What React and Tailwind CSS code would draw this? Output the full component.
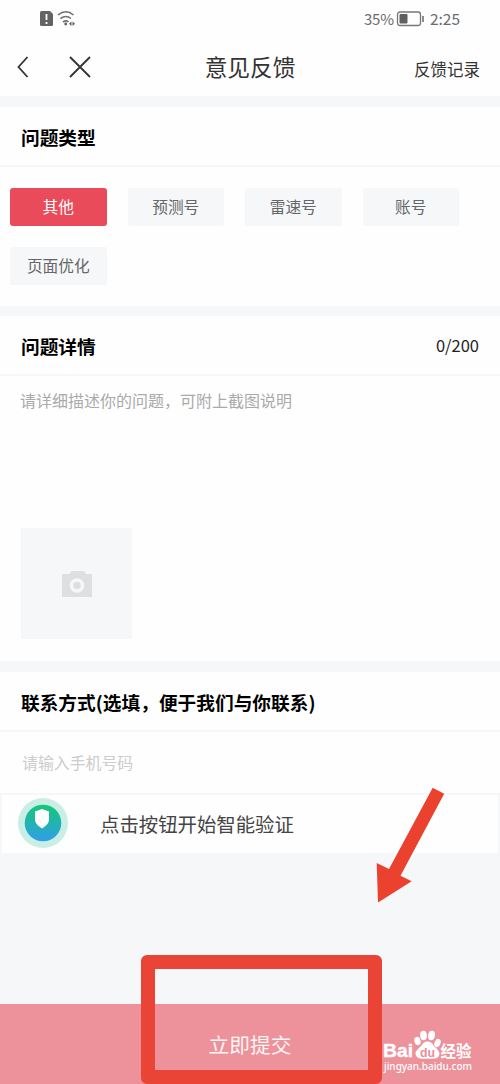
const chips = ['其他', '预测号', '雷速号', '账号', '页面优化'];

function StatusBar() {
  return (
    <div className="flex h-[38px] items-center justify-between pl-[40px] pr-[40px] text-[15.500px] text-[#6b6b6b]">
      <svg width="36" height="18" viewBox="0 0 36 18" fill="none">
        <path d="M1.500 1h8.500l3 3v10.500q0 1.500-1.500 1.500h-10Q0 16 0 14.500V2.500Q0 1 1.500 1Z" fill="#636363" />
        <path d="M6.500 4v6M6.500 12v2" stroke="#fff" strokeWidth="1.800" />
        <path d="M18 5q8-6.500 15.500 0M20.500 8.500q5.500-4 10.500 0M23 12q3-2.300 5.500 0" stroke="#707070" strokeWidth="1.600" />
        <circle cx="25.700" cy="14" r="1.400" fill="#606060" />
        <path d="m31.500 11.500-2.500 2.300 2.500 2.300ZM32.500 11.500l2.500 2.300-2.500 2.300Z" fill="#606060" />
      </svg>
      <div className="flex items-center">
        <span className="w-[32px] text-[15px] tracking-[-0.2px]">35%</span>
        <svg width="28" height="16" viewBox="0 0 28 16">
          <rect x="1.500" y="1" width="23" height="13.500" rx="2.500" fill="none" stroke="#777" strokeWidth="1.300" />
          <rect x="3.500" y="3" width="8" height="9.500" rx="1" fill="#606060" />
          <path d="M27 5v6" stroke="#666" strokeWidth="1.500" />
        </svg>
        <span className="ml-[6px]">2:25</span>
      </div>
    </div>
  );
}

function SectionTitle({ children, aside }) {
  return (
    <div className="flex h-[60px] items-center justify-between border-b-2 border-[#f6f7f7] px-[21px] pt-[2px] text-[18.700px] font-bold text-black">
      <h2>{children}</h2>
      {aside && <span className="pb-[2px] text-[16.500px] font-normal text-[#222]">{aside}</span>}
    </div>
  );
}

function Watermark() {
  return (
    <div className="absolute right-[20px] bottom-[6px] w-[98px] text-white">
      <svg width="98" height="50" viewBox="0 0 98 50" className="block">
        <g fill="#fff">
          <ellipse cx="35.500" cy="13" rx="3" ry="4.300" transform="rotate(-18 35.500 13)" />
          <ellipse cx="41.500" cy="7.500" rx="3.400" ry="4.700" transform="rotate(-5 41.500 7.500)" />
          <ellipse cx="49.500" cy="7.500" rx="3.400" ry="4.700" transform="rotate(10 49.500 7.500)" />
          <ellipse cx="55.500" cy="15" rx="3" ry="4.300" transform="rotate(20 55.500 15)" />
          <path d="M45.500 13.500q4 0 6 4l4 4q4 5 0 8-3 2-10 1-7 1-10-1-4-4 0-8l4-4q2-4 6-4Z" />
          <text x="1" y="29" fontFamily="Liberation Sans" fontWeight="bold" fontSize="19" textLength="30" lengthAdjust="spacingAndGlyphs" stroke="#fff" strokeWidth="0.400">Bai</text>
          <text x="58.500" y="28.500" fontFamily="Noto Sans CJK SC" fontWeight="bold" fontSize="15.500" textLength="31">经验</text>
        </g>
        <text x="38" y="29" fill="#ed8d98" fontFamily="Liberation Sans" fontWeight="bold" fontSize="13" textLength="15" lengthAdjust="spacingAndGlyphs">du</text>
        <text x="2" y="42" fill="#fff" fontFamily="Noto Sans" fontWeight="500" fontSize="10" textLength="88">jingyan.baidu.com</text>
      </svg>
    </div>
  );
}

export default function App() {
  return (
    <main className="relative flex h-[1084px] w-[500px] flex-col overflow-hidden bg-[#f6f7f9] font-['Noto_Sans_CJK_SC',sans-serif]">
      <header className="h-[96px] shrink-0 bg-[#fefefe]">
        <StatusBar />
        <div className="grid h-[58px] grid-cols-[1fr_auto_1fr] items-center text-[#333]">
          <div className="flex items-center gap-[40px] pl-[17px]">
            <svg width="12" height="22" viewBox="0 0 12 22" fill="none" stroke="#333" strokeWidth="1.800"><path d="M10.500 1 1.500 11l9 10" /></svg>
            <svg width="22" height="22" viewBox="0 0 22 22" fill="none" stroke="#333" strokeWidth="1.800"><path d="m1 1 20 20M21 1 1 21" /></svg>
          </div>
          <h1 className="text-[22.700px] leading-none">意见反馈</h1>
          <span className="pt-[4px] pr-[20px] text-right text-[16.500px]">反馈记录</span>
        </div>
      </header>
      <section className="mt-[11px] h-[199px] shrink-0 bg-[#fefefe]">
        <SectionTitle>问题类型</SectionTitle>
        <div className="grid grid-cols-4 gap-x-[21px] gap-y-[21px] pt-[21px] pr-[41px] pl-[10px] text-[15.700px]">
          {chips.map((chip, i) => (
            <button key={chip} className={i === 0 ? 'h-[38px] rounded-[3px] bg-[#e94b5b] text-white' : 'h-[38px] rounded-[2px] bg-[#f6f7f9] text-[#666]'}>{chip}</button>
          ))}
        </div>
      </section>
      <section className="mt-[10px] h-[345px] shrink-0 bg-[#fefefe]">
        <SectionTitle aside="0/200">问题详情</SectionTitle>
        <p className="h-[152px] pt-[12px] pl-[20px] text-[16px] leading-[24px] text-[#aaa]">请详细描述你的问题，可附上截图说明</p>
        <div className="ml-[21px] flex size-[111px] items-center justify-center bg-[#f6f7f9]">
          <svg width="30" height="28" viewBox="0 0 30 28">
            <path d="M0 4h7l3-3h12l2 3h6v23H0Z" fill="#dddfe0" />
            <circle cx="15" cy="15.500" r="5.500" fill="none" stroke="#f6f7f9" strokeWidth="3.500" />
          </svg>
        </div>
      </section>
      <section className="mt-[11px] h-[181px] shrink-0 bg-[#fefefe]">
        <SectionTitle>联系方式(选填，便于我们与你联系)</SectionTitle>
        <p className="flex h-[63px] items-center border-b-2 border-[#f6f7f7] pl-[22px] text-[15.900px] text-[#ccc]">请输入手机号码</p>
        <div className="flex h-[58px] items-center border-x-2 border-[#f6f7f9] pl-[16px] text-[19.400px] text-[#444]">
          <svg width="50" height="52" viewBox="0 0 50 52">
            <defs><linearGradient id="shield-bg" x1="0" y1="0" x2="0" y2="1"><stop stopColor="#12c878" /><stop offset="1" stopColor="#319ee9" /></linearGradient></defs>
            <circle cx="25" cy="25" r="25" fill="#c9eee5" />
            <circle cx="25" cy="25" r="18.300" fill="url(#shield-bg)" />
            <path d="m24 11 7 2.500v8q0 5-7 9-7-4-7-9v-8Z" fill="#fff" />
          </svg>
          <span className="ml-[32px]">点击按钮开始智能验证</span>
        </div>
      </section>
      <button className="mt-auto h-[80px] shrink-0 bg-[#ed919b] pt-[1px] text-[20.700px] text-[#fff5f5]">立即提交</button>
      <div className="absolute top-[955px] left-[141px] h-[129px] w-[241px] rounded-[6px] border-[14px] border-[#e94435]" />
      <svg className="absolute top-[780px] left-[370px]" width="80" height="130" viewBox="0 0 80 130">
        <path d="M62.700 7.700 74.200 13.700 30.500 95.700l11.200 5.600L8 122.500 6.700 83 19 89Z" fill="#eb4230" />
      </svg>
      <Watermark />
    </main>
  );
}
